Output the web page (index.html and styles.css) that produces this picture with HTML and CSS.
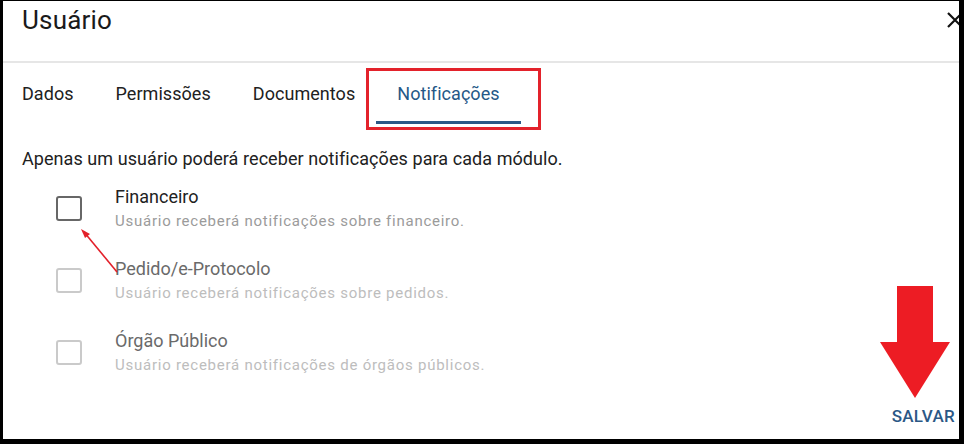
FILE: index.html
```html
<!DOCTYPE html>
<html lang="pt-BR">
<head>
    <meta charset="UTF-8">
    <meta name="viewport" content="width=device-width, initial-scale=1.0">
    <title>Usuário</title>
    <link rel="stylesheet" href="styles.css">
</head>
<body>
    <div class="dialog">
        <div class="header">
            <h1 class="title">Usuário</h1>
            <button class="close" aria-label="Fechar">
                <svg width="18" height="18" viewBox="0 0 18 18"><path d="M2 2L16 16M16 2L2 16" stroke="#111" stroke-width="2.2" fill="none"/></svg>
            </button>
        </div>
        <div class="tabs">
            <div class="tab">Dados</div>
            <div class="tab">Permissões</div>
            <div class="tab">Documentos</div>
            <div class="tab active">Notificações<span class="highlight"></span></div>
        </div>
        <div class="content">
            <p class="intro">Apenas um usuário poderá receber notificações para cada módulo.</p>
            <div class="options">
                <label class="option">
                    <span class="check"></span>
                    <span class="text">
                        <span class="name">Financeiro</span>
                        <span class="hint">Usuário receberá notificações sobre financeiro.</span>
                    </span>
                </label>
                <label class="option disabled">
                    <span class="check"></span>
                    <span class="text">
                        <span class="name">Pedido/e-Protocolo</span>
                        <span class="hint">Usuário receberá notificações sobre pedidos.</span>
                    </span>
                </label>
                <label class="option disabled">
                    <span class="check"></span>
                    <span class="text">
                        <span class="name">Órgão Público</span>
                        <span class="hint">Usuário receberá notificações de órgãos públicos.</span>
                    </span>
                </label>
            </div>
        </div>
        <div class="footer">
            <button class="save">SALVAR</button>
        </div>

        <!-- annotations drawn over the screenshot -->
        <svg class="pointer" width="40" height="46" viewBox="0 0 40 46">
            <path d="M37 43L4 3" stroke="#e3202a" stroke-width="1.6" fill="none"/>
            <path d="M1 0L10 5L5 9Z" fill="#e3202a"/>
        </svg>
        <svg class="big-arrow" width="70" height="112" viewBox="0 0 70 112">
            <path d="M17 0H53V56H70L35 112L0 56H17Z" fill="#ed1c24"/>
        </svg>
    </div>
</body>
</html>
```

FILE: styles.css
```css
* {
    margin: 0;
    padding: 0;
    box-sizing: border-box;
}
body {
    background: #000;
    font-family: Roboto, "Noto Sans", Arial, sans-serif;
    color: #212121;
}
.dialog {
    position: relative;
    display: flex;
    flex-direction: column;
    margin: 1px 5px 5px 3px;
    height: 438px;
    background: #fff;
    overflow: hidden;
}
.header {
    display: flex;
    justify-content: space-between;
    align-items: flex-start;
    height: 62px;
    border-bottom: 2px solid #e6e6e6;
}
.title {
    padding: 4px 0 0 19px;
    font-size: 26px;
    line-height: 30px;
    font-weight: 400;
    letter-spacing: 0.2px;
    color: #1a1a1a;
}
.close {
    margin: 10px -5px 0 0;
    width: 18px;
    height: 18px;
    border: none;
    background: none;
}
.tabs {
    display: flex;
    margin-left: -2px;
}
.tab {
    position: relative;
    padding: 21px 21px 17px;
    font-size: 18px;
    line-height: 20px;
    letter-spacing: 0.05px;
    color: #212121;
    border-bottom: 3px solid transparent;
}
.tab.active {
    color: #255887;
    border-bottom-color: #2b5886;
}
.highlight {
    position: absolute;
    left: -10px;
    right: -20px;
    top: 5px;
    bottom: -9px;
    border: 3px solid #e3222b;
}
.content {
    flex: 1;
    padding: 23px 0 0 19px;
}
.intro {
    font-size: 18px;
    line-height: 24px;
    letter-spacing: 0.07px;
    color: #212121;
}
.options {
    display: flex;
    flex-direction: column;
    gap: 25px;
    margin-top: 14px;
    padding-left: 34px;
}
.option {
    display: flex;
    align-items: center;
    gap: 33px;
}
.check {
    width: 26px;
    height: 25px;
    border: 2px solid #676767;
    border-radius: 3px;
}
.text {
    display: flex;
    flex-direction: column;
}
.name {
    font-size: 18px;
    line-height: 24px;
    color: #212121;
}
.hint {
    margin-top: 1px;
    font-size: 15px;
    line-height: 22px;
    letter-spacing: 0.75px;
    color: #9b9b9b;
}
.disabled .check {
    border-color: #cacaca;
}
.disabled .name {
    color: #6a6a6a;
}
.disabled .hint {
    color: #bdbdbd;
}
.footer {
    display: flex;
    justify-content: flex-end;
    padding: 0 4px 13px 0;
}
.save {
    border: none;
    background: none;
    font-family: Roboto, Arial, sans-serif;
    font-size: 17px;
    line-height: 20px;
    font-weight: 500;
    letter-spacing: 0.3px;
    color: #2b5886;
}
.pointer {
    position: absolute;
    left: 77px;
    top: 228px;
}
.big-arrow {
    position: absolute;
    left: 877px;
    top: 285px;
}
```
